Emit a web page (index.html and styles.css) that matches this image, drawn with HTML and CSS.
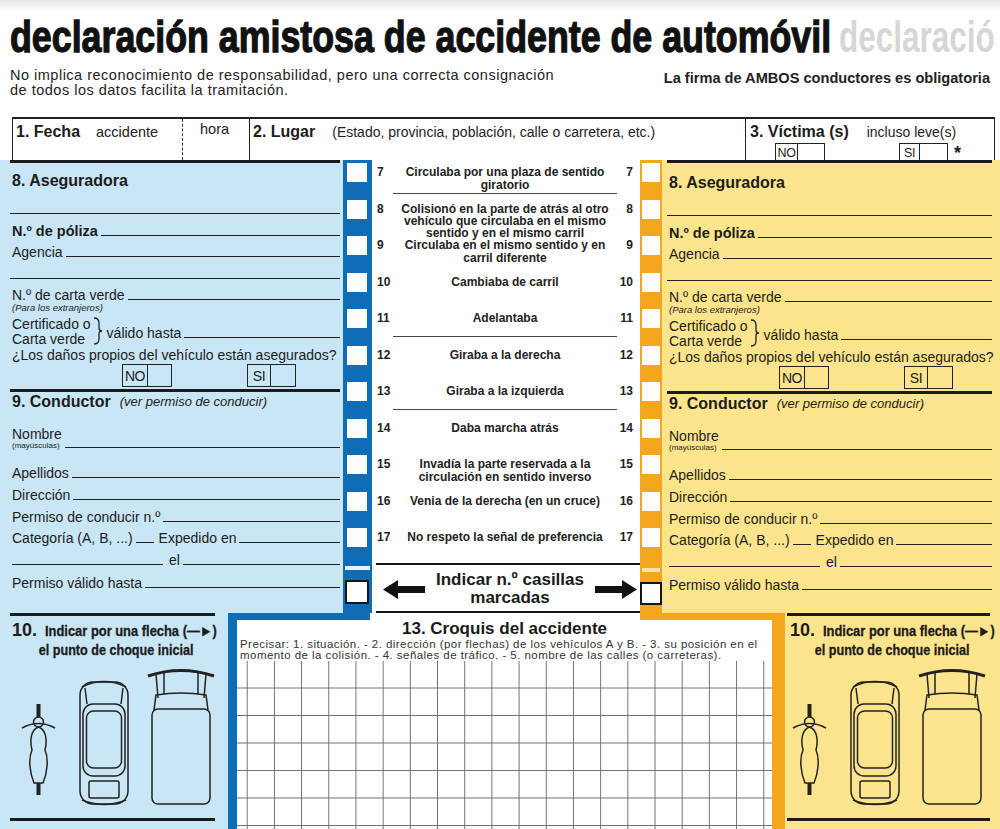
FILE: index.html
```html
<!DOCTYPE html>
<html lang="es">
<head>
<meta charset="utf-8">
<title>Declaración amistosa de accidente de automóvil</title>
<link rel="stylesheet" href="styles.css">
</head>
<body>
<div class="page">
  <header class="head">
    <h1 class="title"><span class="title-txt">declaración amistosa de accidente de automóvil</span></h1>
    <span class="ghost">declaració</span>
    <div class="sub">
      <p class="sub-l">No implica reconocimiento de responsabilidad, pero una correcta consignación<br>de todos los datos facilita la tramitación.</p>
      <p class="sub-r">La firma de AMBOS conductores es obligatoria</p>
    </div>
  </header>

  <section class="row1">
    <div class="c c-fecha"><b class="ch">1. Fecha</b><span class="cs cs-acc">accidente</span></div>
    <div class="c c-hora"><span class="cs">hora</span></div>
    <div class="c c-lugar"><b class="ch">2. Lugar</b><span class="cs cs-lug">(Estado, provincia, población, calle o carretera, etc.)</span></div>
    <div class="c c-vic">
      <div><b class="ch">3. Víctima (s)</b><span class="cs cs-inc">incluso leve(s)</span></div>
      <div class="vic-boxes">
        <span class="yn yn-top"><span class="yl">NO</span><span class="ye"></span></span>
        <span class="yn yn-top yn-top-si"><span class="yl">SI</span><span class="ye"></span></span>
        <span class="ast">*</span>
      </div>
    </div>
  </section>

  <main class="main">
    <div class="col col-l">
      <div class="sec">
        <div class="r r-a"><b class="h">8. Aseguradora</b></div>
        <div class="r blank r-b"></div>
        <div class="r r-c"><b class="lb">N.º de póliza</b><span class="u"></span></div>
        <div class="r r-d"><span class="lb">Agencia</span><span class="u"></span></div>
        <div class="r blank r-e"></div>
        <div class="r r-f"><span class="lb">N.º de carta verde</span><span class="u"></span></div>
        <div class="r r-g"><em class="tiny">(Para los extranjeros)</em></div>
        <div class="r r-h">
          <span class="stack"><span>Certificado o</span><span>Carta verde</span></span>
          <svg class="brace" width="10" height="28" viewBox="0 0 10 28"><path d="M1 1 Q6 1 6 6 L6 11 Q6 14 9 14 Q6 14 6 17 L6 22 Q6 27 1 27" fill="none" stroke="#222" stroke-width="1.3"/></svg>
          <span class="vh"><span class="lb">válido hasta</span><span class="u"></span></span>
        </div>
        <div class="r r-i"><span class="lb">¿Los daños propios del vehículo están asegurados?</span></div>
        <div class="r r-j">
          <span class="yn yn-no"><span class="yl">NO</span><span class="ye"></span></span>
          <span class="yn yn-si"><span class="yl">SI</span><span class="ye"></span></span>
        </div>
        <div class="r r-l"><b class="h">9. Conductor</b><em class="note">(ver permiso de conducir)</em></div>
        <div class="r r-m"><span class="stack2"><span class="lb">Nombre</span><span class="may">(mayúsculas)</span></span><span class="u"></span></div>
        <div class="r r-n"><span class="lb">Apellidos</span><span class="u"></span></div>
        <div class="r r-o"><span class="lb">Dirección</span><span class="u"></span></div>
        <div class="r r-p"><span class="lb">Permiso de conducir n.º</span><span class="u"></span></div>
        <div class="r r-q"><span class="lb">Categoría (A, B, ...)</span><span class="u u-short"></span><span class="lb lb-gap">Expedido en</span><span class="u"></span></div>
        <div class="r r-r"><span class="u u-long"></span><span class="lb lb-el">el</span><span class="u"></span></div>
        <div class="r r-s"><span class="lb">Permiso válido hasta</span><span class="u"></span></div>
      </div>
    </div>

    <div class="strip strip-b">
      <div class="boxes">
        <span class="bx"></span><span class="bx"></span><span class="bx"></span><span class="bx"></span><span class="bx"></span><span class="bx"></span><span class="bx"></span><span class="bx"></span><span class="bx"></span><span class="bx"></span><span class="bx"></span>
      </div>
      <span class="slit"></span>
      <span class="bx-end"></span>
    </div>

    <div class="mid">
      <ol class="items">
        <li class="it"><span class="n">7</span><span class="t rule rule-2">Circulaba por una plaza de sentido<br>giratorio</span><span class="n">7</span></li>
        <li class="it it-3"><span class="n">8</span><span class="t">Colisionó en la parte de atrás al otro<br>vehículo que circulaba en el mismo<br>sentido y en el mismo carril</span><span class="n">8</span></li>
        <li class="it"><span class="n">9</span><span class="t">Circulaba en el mismo sentido y en<br>carril diferente</span><span class="n">9</span></li>
        <li class="it"><span class="n">10</span><span class="t">Cambiaba de carril</span><span class="n">10</span></li>
        <li class="it"><span class="n">11</span><span class="t rule">Adelantaba</span><span class="n">11</span></li>
        <li class="it"><span class="n">12</span><span class="t">Giraba a la derecha</span><span class="n">12</span></li>
        <li class="it"><span class="n">13</span><span class="t rule">Giraba a la izquierda</span><span class="n">13</span></li>
        <li class="it"><span class="n">14</span><span class="t">Daba marcha atrás</span><span class="n">14</span></li>
        <li class="it"><span class="n">15</span><span class="t">Invadía la parte reservada a la<br>circulación en sentido inverso</span><span class="n">15</span></li>
        <li class="it"><span class="n">16</span><span class="t">Venia de la derecha (en un cruce)</span><span class="n">16</span></li>
        <li class="it"><span class="n">17</span><span class="t">No respeto la señal de preferencia</span><span class="n">17</span></li>
      </ol>
      <div class="mline"></div>
      <div class="indicar">
        <svg width="42" height="19" viewBox="0 0 42 19"><polygon points="0,9.5 15,0 15,6 42,6 42,13 15,13 15,19" fill="#111"/></svg>
        <p class="ind-t">Indicar n.º casillas<br>marcadas</p>
        <svg width="42" height="19" viewBox="0 0 42 19"><polygon points="42,9.5 27,0 27,6 0,6 0,13 27,13 27,19" fill="#111"/></svg>
      </div>
      <div class="mline"></div>
    </div>

    <div class="strip strip-o">
      <div class="boxes">
        <span class="bx"></span><span class="bx"></span><span class="bx"></span><span class="bx"></span><span class="bx"></span><span class="bx"></span><span class="bx"></span><span class="bx"></span><span class="bx"></span><span class="bx"></span><span class="bx"></span>
      </div>
      <span class="slit"></span>
      <span class="bx-end"></span>
    </div>

    <div class="col col-r">
      <div class="sec">
        <div class="r r-a"><b class="h">8. Aseguradora</b></div>
        <div class="r blank r-b"></div>
        <div class="r r-c"><b class="lb">N.º de póliza</b><span class="u"></span></div>
        <div class="r r-d"><span class="lb">Agencia</span><span class="u"></span></div>
        <div class="r blank r-e"></div>
        <div class="r r-f"><span class="lb">N.º de carta verde</span><span class="u"></span></div>
        <div class="r r-g"><em class="tiny">(Para los extranjeros)</em></div>
        <div class="r r-h">
          <span class="stack"><span>Certificado o</span><span>Carta verde</span></span>
          <svg class="brace" width="10" height="28" viewBox="0 0 10 28"><path d="M1 1 Q6 1 6 6 L6 11 Q6 14 9 14 Q6 14 6 17 L6 22 Q6 27 1 27" fill="none" stroke="#222" stroke-width="1.3"/></svg>
          <span class="vh"><span class="lb">válido hasta</span><span class="u"></span></span>
        </div>
        <div class="r r-i"><span class="lb">¿Los daños propios del vehículo están asegurados?</span></div>
        <div class="r r-j">
          <span class="yn yn-no"><span class="yl">NO</span><span class="ye"></span></span>
          <span class="yn yn-si"><span class="yl">SI</span><span class="ye"></span></span>
        </div>
        <div class="r r-l"><b class="h">9. Conductor</b><em class="note">(ver permiso de conducir)</em></div>
        <div class="r r-m"><span class="stack2"><span class="lb">Nombre</span><span class="may">(mayúsculas)</span></span><span class="u"></span></div>
        <div class="r r-n"><span class="lb">Apellidos</span><span class="u"></span></div>
        <div class="r r-o"><span class="lb">Dirección</span><span class="u"></span></div>
        <div class="r r-p"><span class="lb">Permiso de conducir n.º</span><span class="u"></span></div>
        <div class="r r-q"><span class="lb">Categoría (A, B, ...)</span><span class="u u-short"></span><span class="lb lb-gap">Expedido en</span><span class="u"></span></div>
        <div class="r r-r"><span class="u u-long"></span><span class="lb lb-el">el</span><span class="u"></span></div>
        <div class="r r-s"><span class="lb">Permiso válido hasta</span><span class="u"></span></div>
      </div>
    </div>
  </main>

  <section class="bottom">
    <div class="side side-l">
      <p class="p10"><b class="n10">10.</b><span class="cond c1">Indicar por una flecha (—►)</span></p>
      <p class="p10b"><span class="cond c2">el punto de choque inicial</span></p>
      <svg class="veh" width="200" height="145" viewBox="0 0 200 145">
        <g fill="none" stroke="#222" stroke-width="1.5">
          <path d="M7 64 Q23.5 55 40 64"/>
          <circle cx="23.5" cy="58" r="5"/>
          <path d="M23.5 63 C32 66 32 78 30 86 C34 95 32 110 28 119 L19 119 C15 110 13 95 17 86 C15 78 15 66 23.5 63 Z"/>
          <rect x="65" y="18" width="48" height="122" rx="13"/>
          <path d="M67 23 Q89 12 111 23"/>
          <path d="M70 24 L72 40 M108 24 L106 40"/>
          <rect x="68" y="40" width="42" height="72" rx="10"/>
          <rect x="71.5" y="47" width="35" height="57" rx="7"/>
          <rect x="74" y="117" width="30" height="17" rx="2"/>
          <path d="M67 136 Q89 145 111 136"/>
          <path d="M133 12 Q166 1 199 12" stroke-width="3"/>
          <path d="M141 10 L143 34 M149 8 L149 30 M191 10 L189 34 M183 8 L183 30"/>
          <path d="M139 46 L141 31 Q166 27 191 31 L193 46"/>
          <rect x="137" y="45" width="58" height="95" rx="6"/>
        </g>
        <rect x="21.5" y="40" width="4" height="13" fill="#222"/>
        <rect x="21.5" y="119" width="4" height="12" fill="#222"/>
      </svg>
      <div class="side-bot"></div>
    </div>

    <div class="croquis">
      <div class="band"></div>
      <h2 class="cq-title">13. Croquis del accidente</h2>
      <p class="cq-text">Precisar: 1. situación. - 2. dirección (por flechas) de los vehículos A y B. - 3. su posición en el<br>momento de la colisión. - 4. señales de tráfico. - 5. nombre de las calles (o carreteras).</p>
      <div class="cq-grid"></div>
    </div>

    <div class="side side-r">
      <p class="p10"><b class="n10">10.</b><span class="cond c1">Indicar por una flecha (—►)</span></p>
      <p class="p10b"><span class="cond c2">el punto de choque inicial</span></p>
      <svg class="veh" width="200" height="145" viewBox="0 0 200 145">
        <g fill="none" stroke="#222" stroke-width="1.5">
          <path d="M7 64 Q23.5 55 40 64"/>
          <circle cx="23.5" cy="58" r="5"/>
          <path d="M23.5 63 C32 66 32 78 30 86 C34 95 32 110 28 119 L19 119 C15 110 13 95 17 86 C15 78 15 66 23.5 63 Z"/>
          <rect x="65" y="18" width="48" height="122" rx="13"/>
          <path d="M67 23 Q89 12 111 23"/>
          <path d="M70 24 L72 40 M108 24 L106 40"/>
          <rect x="68" y="40" width="42" height="72" rx="10"/>
          <rect x="71.5" y="47" width="35" height="57" rx="7"/>
          <rect x="74" y="117" width="30" height="17" rx="2"/>
          <path d="M67 136 Q89 145 111 136"/>
          <path d="M133 12 Q166 1 199 12" stroke-width="3"/>
          <path d="M141 10 L143 34 M149 8 L149 30 M191 10 L189 34 M183 8 L183 30"/>
          <path d="M139 46 L141 31 Q166 27 191 31 L193 46"/>
          <rect x="137" y="45" width="58" height="95" rx="6"/>
        </g>
        <rect x="21.5" y="40" width="4" height="13" fill="#222"/>
        <rect x="21.5" y="119" width="4" height="12" fill="#222"/>
      </svg>
      <div class="side-bot"></div>
    </div>
  </section>
</div>
</body>
</html>
```

FILE: styles.css
```css
:root {
  --lblue: #c9e6f6;
  --dblue: #0f6db6;
  --yel: #fce48c;
  --ora: #f5a61f;
  --ink: #1c1c1c;
}

* { box-sizing: border-box; }

html, body {
  margin: 0;
  padding: 0;
  background: #fff;
}

body {
  font-family: "Liberation Sans", Arial, sans-serif;
  color: var(--ink);
}

.page {
  position: relative;
  width: 1000px;
  height: 829px;
  overflow: hidden;
  background: #fff;
}

/* ---------- header ---------- */
.head {
  position: relative;
  background: linear-gradient(#e4e4e4 0, #fff 11px);
}

.title {
  position: relative;
  z-index: 1;
  margin: 0;
  padding-top: 14px;
  height: 59px;
  font-size: 45px;
  line-height: 45px;
  font-weight: bold;
  white-space: nowrap;
}

.title-txt {
  display: inline-block;
  margin-left: 10px;
  transform: scaleX(0.795);
  transform-origin: 0 50%;
  -webkit-text-stroke: 1.3px #111;
  color: #111;
}

.ghost {
  position: absolute;
  left: 839px;
  top: 14px;
  font-size: 45px;
  line-height: 45px;
  font-weight: bold;
  color: #d6d6d6;
  white-space: nowrap;
  transform: scaleX(0.7);
  transform-origin: 0 50%;
}

.sub {
  display: flex;
  justify-content: space-between;
  margin-top: 9px;
  padding: 0 10px;
  height: 30px;
}

.sub-l {
  margin: 0;
  font-size: 14.5px;
  line-height: 15px;
  letter-spacing: 0.5px;
  color: #222;
}

.sub-r {
  margin: 3px 0 0;
  font-size: 14.6px;
  line-height: 15px;
  font-weight: bold;
  color: #222;
}

/* ---------- row 1 ---------- */
.row1 {
  display: grid;
  grid-template-columns: 170px 67px 496px 1fr;
  margin: 19px 0 0 12px;
  width: 983px;
  height: 43px;
  border-top: 2px solid #222;
  border-right: 1.5px solid #222;
}

.c {
  border-left: 1.5px solid #222;
  padding: 4px 0 0 3px;
  white-space: nowrap;
}

.c-hora {
  border-left: 1.5px dashed #333;
  padding: 1px 0 0 17px;
}

.ch {
  font-size: 16px;
  line-height: 18px;
}

.cs {
  font-size: 14.5px;
  line-height: 18px;
  color: #222;
}

.cs-acc { margin-left: 16px; }
.cs-lug { margin-left: 17px; font-size: 14px; }
.cs-inc { margin-left: 18px; font-size: 14px; }

.c-vic {
  display: flex;
  flex-direction: column;
  padding-left: 4px;
}

.vic-boxes {
  display: flex;
  align-items: flex-end;
  margin-top: auto;
  padding-left: 25px;
}

.yn {
  display: flex;
  border: 1px solid #222;
  background: transparent;
}

.yl {
  display: flex;
  align-items: center;
  justify-content: center;
  border-right: 1px solid #222;
  font-size: 13px;
  letter-spacing: -0.4px;
}

.yn-top {
  height: 17px;
  border-bottom: 0;
}

.yn-top .yl { width: 22px; font-size: 12.5px; padding-top: 2px; }
.yn-top .ye { width: 26px; }
.yn-top-si { margin-left: 74px; }
.yn-top-si .yl { width: 20px; }
.yn-top-si .ye { width: 27px; }

.ast {
  margin: 0 0 0 6px;
  font-size: 18px;
  line-height: 14px;
  font-weight: bold;
}

/* ---------- main area ---------- */
.main {
  display: grid;
  grid-template-columns: 343px 29px 268px 22px 338px;
  height: 453px;
}

.col-l {
  background: var(--lblue);
  padding: 0 3px 0 10px;
}

.col-r {
  background: var(--yel);
  padding: 0 8px 0 5px;
}

.sec {
  border-top: 3px solid #1a1a1a;
  padding-left: 2px;
}

.r {
  display: flex;
  align-items: flex-end;
  white-space: nowrap;
}

.lb {
  font-size: 14px;
  line-height: 16px;
}

b.lb { font-size: 14.5px; }

.h {
  font-size: 16px;
  line-height: 18px;
}

.u {
  flex: 1;
  height: 0;
  border-bottom: 1px solid #222;
  margin: 0 0 3px 3px;
}

.blank {
  border-bottom: 1px solid #222;
  margin-left: -2px;
}

.r-a { height: 27px; }
.r-b { height: 24px; }
.r-c { height: 25px; }
.r-d { height: 21px; }
.r-e { height: 19px; }
.r-f { height: 24px; }
.r-g { height: 9px; align-items: flex-start; }
.r-h { height: 34px; }
.r-i { height: 17px; }
.r-j {
  height: 29px;
  align-items: flex-start;
  padding-top: 1px;
  border-bottom: 3px solid #1a1a1a;
  margin-left: -2px;
  padding-left: 2px;
}
.r-l { height: 19px; }
.r-m { height: 40px; }
.r-n { height: 30px; }
.r-o { height: 22px; }
.r-p { height: 22px; }
.r-q { height: 21px; }
.r-r { height: 22px; }
.r-s { height: 23px; }

.col-r .r-a { height: 29px; }

.tiny {
  font-size: 9.5px;
  line-height: 9px;
}

.stack {
  display: flex;
  flex-direction: column;
  font-size: 14px;
  line-height: 14.5px;
}

.brace {
  margin: 0 4px 1px 2px;
  flex: none;
}

.vh {
  display: flex;
  align-items: flex-end;
  flex: 1;
  margin-bottom: 5px;
}

.r-j .yn { height: 23px; }
.r-j .yl { width: 25px; font-size: 14px; }
.r-j .ye { width: 23px; }
.yn-no { margin-left: 110px; }
.yn-si { margin-left: 75px; }
.r-j .yn-si .yl { width: 23px; }
.r-j .yn-si .ye { width: 24px; }

.note {
  margin: 0 0 1px 9px;
  font-size: 13px;
  line-height: 16px;
}

.stack2 {
  display: flex;
  flex-direction: column;
  margin-bottom: 1px;
}

.stack2 .lb { line-height: 14px; }

.may {
  font-size: 8px;
  line-height: 9px;
}

.u-short { flex: 0 0 18px; }
.lb-gap { margin-left: 5px; }
.u-long { flex: 0 0 151px; margin-left: 0; }
.lb-el { margin-left: 6px; }

/* ---------- checkbox strips ---------- */
.strip {
  display: flex;
  flex-direction: column;
  padding-top: 3px;
}

.strip-b { background: var(--dblue); }
.strip-o { background: var(--ora); }

.boxes {
  display: grid;
  grid-template-rows: repeat(11, 36.5px);
}

.bx {
  display: block;
  height: 19px;
  background: #fdfdfd;
}

.strip-b .bx { width: 20px; margin-left: 4px; }
.strip-o .bx { width: 18px; margin-left: 2px; }

.slit {
  display: block;
  height: 4px;
  margin-top: 1px;
  background: #e9f3fa;
}

.strip-b .slit { margin: 1px 2px 0 2px; }
.strip-o .slit { margin: 3px 2px 0 2px; background: #fbe3b0; }

.bx-end {
  display: block;
  background: #fff;
  border: 2px solid #151515;
}

.strip-b .bx-end { width: 24px; height: 24px; margin: 10px 0 0 2px; }
.strip-o .bx-end { width: 22px; height: 23px; margin: 10px 0 0 0; }

/* ---------- middle list ---------- */
.mid {
  padding-top: 6px;
  background: #fff;
}

.items {
  display: grid;
  grid-template-rows: repeat(10, 36.5px) 32px;
  margin: 0;
  padding: 0;
  list-style: none;
}

.it {
  display: grid;
  grid-template-columns: 20px 1fr 20px;
  align-items: start;
  padding: 0 7px 0 5px;
  font-size: 12px;
  line-height: 12.5px;
  font-weight: bold;
  color: #222;
  white-space: nowrap;
}

.it-3 { line-height: 12px; }

.n:last-child { text-align: right; }

.t { text-align: center; }

.rule {
  height: 25px;
  border-bottom: 1px solid #444;
  margin: 0 -4px;
}

.rule-2 { height: 28px; }

.mline {
  height: 2px;
  margin: 0 0 0 4px;
  background: #151515;
}

.indicar {
  display: flex;
  align-items: center;
  justify-content: space-between;
  height: 46px;
  padding: 2px 3px 0 11px;
}

.ind-t {
  margin: 0;
  font-size: 17px;
  line-height: 18.5px;
  font-weight: bold;
  text-align: center;
  color: #1a1a1a;
}

/* ---------- bottom ---------- */
.bottom {
  display: flex;
  height: 216px;
}

.side {
  flex: none;
}

.side-l {
  width: 228px;
  background: var(--lblue);
  padding: 0 13px 0 10px;
}

.side-r {
  width: 215px;
  background: var(--yel);
  padding: 0 10px 0 2px;
}

.p10 {
  margin: 0;
  padding-top: 6px;
  border-top: 3px solid #1a1a1a;
  height: 27px;
  white-space: nowrap;
  display: flex;
  align-items: flex-end;
}

.side-l .p10 { padding-left: 2px; }
.side-r .p10 { padding-left: 3px; }

.n10 {
  font-size: 18px;
  line-height: 19px;
}

.cond {
  display: inline-block;
  font-size: 15px;
  line-height: 19px;
  font-weight: bold;
  white-space: nowrap;
  -webkit-text-stroke: 0.3px #1a1a1a;
}

.c1 {
  margin-left: 8px;
  transform: scaleX(0.86);
  transform-origin: 0 50%;
}

.p10b {
  margin: 0;
  height: 19px;
  text-align: center;
}

.c2 {
  transform: scaleX(0.84);
  transform-origin: 50% 50%;
}

.side-l .p10b { padding-left: 8px; }
.side-r .p10b { padding-left: 8px; }

.veh {
  display: block;
  margin-top: 5px;
}

.side-l .veh { margin-left: 5px; }
.side-r .veh { margin-left: -1px; }

.side-bot {
  margin-top: 9px;
  border-top: 3px solid #1a1a1a;
}

.croquis {
  display: flex;
  flex-direction: column;
  width: 557px;
  border-left: 9px solid var(--dblue);
  border-right: 13px solid var(--ora);
  background: #fff;
}

.band {
  height: 7px;
  flex: none;
  background: linear-gradient(to right, var(--dblue) 0 133px, #fff 133px 403px, var(--ora) 403px);
}

.cq-title {
  margin: 0;
  font-size: 17px;
  line-height: 18px;
  font-weight: bold;
  text-align: center;
  color: #1a1a1a;
}

.cq-text {
  margin: 1px 0 0;
  padding-left: 3px;
  font-size: 11.5px;
  line-height: 11px;
  letter-spacing: 0.45px;
  color: #333;
  white-space: nowrap;
}

.cq-grid {
  flex: 1;
  background-image:
    linear-gradient(to right, transparent 10px, #707070 10px, #707070 11px, transparent 11px),
    linear-gradient(to bottom, transparent 26.5px, #707070 26.5px);
  background-size: 27.2px 100%, 100% 27.5px;
  background-repeat: repeat-x, repeat-y;
}
```
